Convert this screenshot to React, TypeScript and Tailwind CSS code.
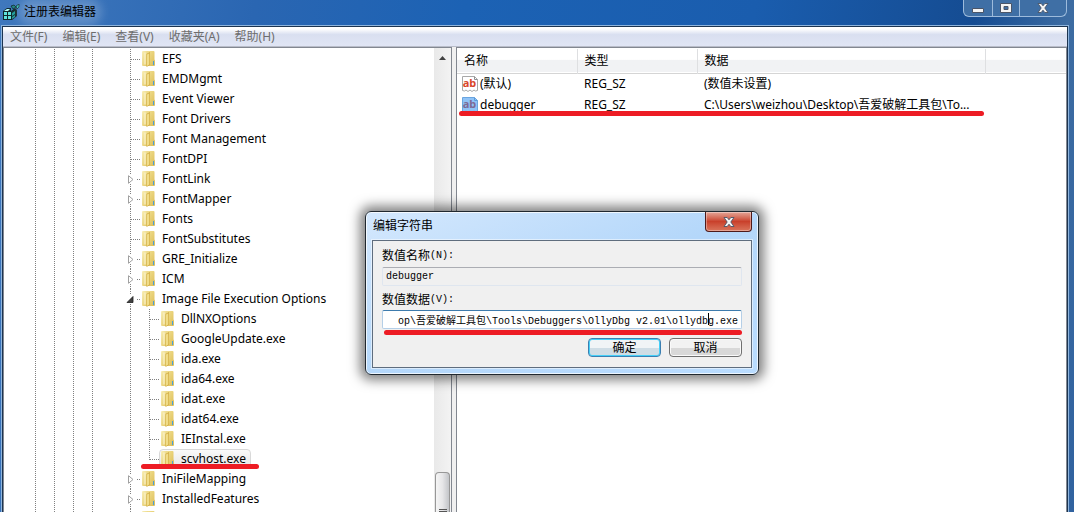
import { ReactNode } from "react";

type Node = {
  name: string;
  state?: "closed" | "open";
  child?: boolean;
  last?: boolean;
  selected?: boolean;
};

const nodes: Node[] = [
  { name: "EFS" },
  { name: "EMDMgmt" },
  { name: "Event Viewer" },
  { name: "Font Drivers" },
  { name: "Font Management" },
  { name: "FontDPI" },
  { name: "FontLink", state: "closed" },
  { name: "FontMapper", state: "closed" },
  { name: "Fonts" },
  { name: "FontSubstitutes" },
  { name: "GRE_Initialize", state: "closed" },
  { name: "ICM", state: "closed" },
  { name: "Image File Execution Options", state: "open" },
  { name: "DllNXOptions", child: true },
  { name: "GoogleUpdate.exe", child: true },
  { name: "ida.exe", child: true },
  { name: "ida64.exe", child: true },
  { name: "idat.exe", child: true },
  { name: "idat64.exe", child: true },
  { name: "IEInstal.exe", child: true },
  { name: "scvhost.exe", child: true, last: true, selected: true },
  { name: "IniFileMapping", state: "closed" },
  { name: "InstalledFeatures", state: "closed" },
  { name: "" },
];

const values = [
  { name: "(默认)", type: "REG_SZ", data: "(数值未设置)", selected: false },
  {
    name: "debugger",
    type: "REG_SZ",
    data: "C:\\Users\\weizhou\\Desktop\\吾爱破解工具包\\To...",
    selected: true,
  },
];

const menus = ["文件(F)", "编辑(E)", "查看(V)", "收藏夹(A)", "帮助(H)"];

const dotsY = "bg-[repeating-linear-gradient(to_bottom,#808080_0_1px,transparent_1px_2px)]";
const dotsX = "bg-[repeating-linear-gradient(to_right,#808080_0_1px,transparent_1px_2px)]";

function FolderIcon() {
  return (
    <svg width="14" height="16" viewBox="0 0 14 16" className="shrink-0" aria-hidden>
      <defs>
        <linearGradient id="folder-back" x1="0" x2="1" y1="0" y2="1">
          <stop offset="0" stopColor="#f3e396" />
          <stop offset="1" stopColor="#dcbc55" />
        </linearGradient>
        <linearGradient id="folder-front" x1="0" x2="1" y1="0" y2="1">
          <stop offset="0" stopColor="#f8efb8" />
          <stop offset="1" stopColor="#e2c561" />
        </linearGradient>
      </defs>
      <path d="M4 0h7.500q1 0 1 1v7.500l.5 1V14q0 1-1 1H4z" fill="url(#folder-back)" />
      <path d="M0 1q0-1 1-1h5v14l-1.500 1H1q-1 0-1-1z" fill="url(#folder-front)" />
      <path d="M4.500 3 8 1v13l-3.500 2z" fill="#d0ab42" />
      <path d="M5 3.500 7.300 2.200v11.300L5 15z" fill="#f0dc88" />
      <path d="M3 1.500v12" stroke="#fdf8d8" strokeWidth="1" />
      <path d="M11.500 10v4" stroke="#4aa0d8" strokeWidth="1" />
    </svg>
  );
}

function ValueIcon({ selected }: { selected: boolean }) {
  return (
    <svg width="16" height="16" viewBox="0 0 16 16" className="shrink-0" aria-hidden>
      <path
        d="M.5.500h12l3 3v11l-2 .5-1.500-1-2 1.500-2-1.500-2 1.500-2-1.500-1.500 1-2-.5z"
        fill={selected ? "#8fc3f7" : "#fff"}
        stroke={selected ? "#6aa5e0" : "#a8a8a8"}
      />
      <path d="M12.500.500v3h3" fill="none" stroke={selected ? "#5d9ad8" : "#909090"} />
      <text x="7.500" y="11" textAnchor="middle" fontSize="11" fontWeight="700" fontFamily="Noto Sans, sans-serif" fill={selected ? "#7d6a96" : "#d8472b"}>
        ab
      </text>
    </svg>
  );
}

function Guide({ line = true }: { line?: boolean }) {
  return <span className="flex h-5 w-[19px] shrink-0 justify-center">{line && <span className={`w-px ${dotsY}`} />}</span>;
}

function Joint({ state, last }: { state?: Node["state"]; last?: boolean }) {
  if (state) {
    return (
      <span className="grid h-5 w-[19px] shrink-0 grid-cols-[5px_9px_5px] grid-rows-[6px_9px_5px] items-center justify-items-center">
        <span className={`col-start-2 h-full w-px ${dotsY}`} />
        <button className="col-start-2 row-start-2 block" aria-label={state === "open" ? "折叠" : "展开"}>
          <svg width="9" height="9" viewBox="0 0 9 9">
            {state === "open" ? (
              <path d="M7 1.500V7.500H1z" fill="#404040" stroke="#202020" strokeWidth=".8" />
            ) : (
              <path d="M2.500.700 7 4.500 2.500 8.300z" fill="#fff" stroke="#a0a0a0" />
            )}
          </svg>
        </button>
        <span className={`col-start-3 row-start-2 h-px w-[3px] justify-self-end ${dotsX}`} />
        <span className={`col-start-2 row-start-3 h-full w-px ${dotsY}`} />
      </span>
    );
  }
  return (
    <span className="flex h-5 w-[19px] shrink-0 items-start pl-[9px]">
      <span className={`w-px shrink-0 ${last ? "h-[11px]" : "h-5"} ${dotsY}`} />
      <span className={`mt-[10px] h-px flex-1 ${dotsX}`} />
    </span>
  );
}

function TreeRow({ node }: { node: Node }) {
  return (
    <li className="flex h-5 items-center">
      <Guide />
      <Guide />
      <Guide />
      <Guide />
      <Guide line={false} />
      {node.child ? <Guide /> : null}
      <Joint state={node.state} last={node.last} />
      <span
        className={`flex h-5 items-center rounded-sm border pr-1 pl-px ${
          node.selected ? "border-[#d9d9d9] bg-linear-to-b from-[#fafafa] to-[#e5e5e5]" : "border-transparent"
        }`}
      >
        <FolderIcon />
        <span className="ml-1.5 whitespace-nowrap leading-4">{node.name}</span>
      </span>
    </li>
  );
}

function CaptionButton({ label, children, className }: { label: string; children: ReactNode; className: string }) {
  return (
    <button aria-label={label} className={`flex h-full items-center justify-center border-[#9dbbdc] ${className}`}>
      {children}
    </button>
  );
}

function CloseMark() {
  return (
    <svg width="12" height="10" viewBox="0 0 12 10" aria-hidden>
      <path d="M1 .500h3.200L6 2.800 7.800.500H11L7.800 5 11 9.500H7.800L6 7.200 4.200 9.500H1L4.200 5z" fill="#f4f4f4" stroke="#4a5568" strokeWidth=".9" />
    </svg>
  );
}

function TitleBar() {
  return (
    <header className="flex h-[26px] shrink-0 items-start justify-between">
      <div className="flex h-6 items-center gap-1 pl-[3px]">
        <svg width="17" height="16" viewBox="0 0 17 16" aria-hidden>
          <path d="M0 7 4 4h4v3l4-3 2 2v6l-5 4H0z" fill="#10282c" />
          <path d="M1 8h3v3H1zM5 8h3v3H5zM1 12h3v3H1zM5 12h3v3H5z" fill="#5fe3dc" />
          <path d="m1 7 3-2h3L5 7z" fill="#b8fffa" />
          <path d="m9 9 3-2v3l-3 2zM9 13l3-2v2l-3 2z" fill="#1f9c98" />
          <path d="m8 2 3-1 2 2-3 2z" fill="#1f8580" stroke="#0b1f22" strokeWidth=".7" />
          <path d="m13 2 3-2v3l-2 2z" fill="#35bdb6" stroke="#0b1f22" strokeWidth=".7" />
        </svg>
        <h1 className="rounded-full bg-white/20 text-black shadow-[0_0_10px_6px_rgba(255,255,255,0.2)]">注册表编辑器</h1>
      </div>
      <div className="mr-[7px] flex h-[17px] overflow-hidden rounded-b-md border border-t-0 border-[#9dbbdc] bg-[#3f6fa5]">
        <CaptionButton label="最小化" className="w-[29px] border-r">
          <svg width="12" height="5" viewBox="0 0 12 5" className="mt-1" aria-hidden>
            <path d="M.5.500h11v4H.5z" fill="#f4f4f4" stroke="#4a5568" />
          </svg>
        </CaptionButton>
        <CaptionButton label="最大化" className="w-[27px] border-r">
          <svg width="12" height="10" viewBox="0 0 12 10" aria-hidden>
            <path fillRule="evenodd" d="M.5.500h11v9H.5zM4 3.500h4v3H4z" fill="#f4f4f4" stroke="#4a5568" />
          </svg>
        </CaptionButton>
        <CaptionButton label="关闭" className="w-[46px]">
          <CloseMark />
        </CaptionButton>
      </div>
    </header>
  );
}

function TreePane() {
  return (
    <section className="relative flex w-[449px] shrink-0 overflow-hidden border border-b-0 border-[#828790] bg-white">
      <ul className="flex-1 pt-px pl-[22px]">
        {nodes.map((n, i) => (
          <TreeRow key={i} node={n} />
        ))}
      </ul>
      <div className="flex w-[17px] flex-col items-center justify-between bg-linear-to-r from-[#e9e9e9] to-[#f3f3f3]">
        <button aria-label="向上滚动" className="flex h-5 w-full items-center justify-center">
          <svg width="7" height="4" viewBox="0 0 7 4" aria-hidden>
            <path d="M0 4 3.500 0 7 4z" fill="#404040" />
          </svg>
        </button>
        <div className="flex h-10 w-[15px] flex-col items-center justify-end gap-px rounded-t-sm border border-b-0 border-[#979797] bg-linear-to-r from-[#f5f5f5] via-[#e6e6e8] to-[#c3c5c9]">
          <span className="h-px w-2 bg-[#555]" />
          <span className="h-px w-2 bg-[#555]" />
        </div>
      </div>
      {/* marker stroke under the selected key */}
      <span className="absolute top-[416px] left-[137px] h-[5px] w-[118px] rounded-full bg-[#ed1c24]" />
    </section>
  );
}

function ValuePane() {
  return (
    <section className="relative min-w-0 flex-1 overflow-hidden border border-b-0 border-[#828790] bg-white pt-px">
      <table className="w-full table-fixed border-collapse text-left">
        <colgroup>
          <col className="w-[120px]" />
          <col className="w-[120px]" />
          <col className="w-[288px]" />
          <col />
        </colgroup>
        <thead>
          <tr className="h-6 border-b border-[#d5d5d5] bg-linear-to-b from-white from-45% to-[#f1f2f4] to-50%">
            {["名称", "类型", "数据"].map((h) => (
              <th key={h} className="border-r border-[#dedfe1] pl-[7px] font-normal">
                {h}
              </th>
            ))}
            <th />
          </tr>
        </thead>
        <tbody>
          {values.map((v) => (
            <tr key={v.name} className="h-[21px]">
              <td className="pl-[5px]">
                <span className="flex items-center gap-0.5">
                  <ValueIcon selected={v.selected} />
                  {v.name}
                </span>
              </td>
              <td className="pl-[7px]">{v.type}</td>
              <td className="whitespace-nowrap pl-[7px]">{v.data}</td>
              <td />
            </tr>
          ))}
        </tbody>
      </table>
      {/* marker stroke under the debugger value */}
      <span className="absolute top-[63px] left-[2px] h-[5px] w-[525px] rounded-full bg-[#ed1c24]" />
    </section>
  );
}

function EditDialog() {
  const field = "block h-[19px] w-full border px-[3px] font-['Liberation_Mono','Noto_Sans_CJK_SC',monospace] text-[10px] outline-none";
  return (
    <div
      role="dialog"
      aria-label="编辑字符串"
      className="absolute top-[211px] left-[365px] w-[394px] rounded-md border border-[#20282f] bg-linear-to-br from-[#d4e8fd] via-[#b4d7fa] to-[#b9dcff] px-[6px] pb-[6px] shadow-[0_0_12px_5px_rgba(0,0,0,0.5),inset_0_0_0_1px_rgba(255,255,255,0.75)]"
    >
      <div className="flex h-7 items-start justify-between">
        <h2 className="pt-1.5 pl-px">编辑字符串</h2>
        <button
          aria-label="关闭"
          className="flex h-5 w-[47px] items-center justify-center rounded-b-sm border border-t-0 border-[#4e1a1a] bg-linear-to-b from-[#e3a597] from-0% via-[#c9402b] via-50% to-[#d9745b] shadow-[inset_0_0_0_1px_rgba(255,255,255,0.35)]"
        >
          <CloseMark />
        </button>
      </div>
      <form className="border border-[#5f6d7e] bg-[#f0f0f0] px-[9px] pt-[7px] pb-[10px] shadow-[0_0_0_1px_rgba(255,255,255,0.5)]">
        <label htmlFor="value-name" className="mb-[3px] flex h-4 items-center">
          数值名称<span className="font-['Liberation_Mono',monospace] text-[10px]">(N):</span>
        </label>
        <input id="value-name" readOnly value="debugger" className={`${field} rounded-xs border-[#dfe6ef] border-t-[#abadb3] bg-[#f0f0f0]`} />
        <label htmlFor="value-data" className="mt-1.5 mb-0.5 flex h-4 items-center">
          数值数据<span className="font-['Liberation_Mono',monospace] text-[10px]">(V):</span>
        </label>
        <div className="relative">
          <input
            id="value-data"
            readOnly
            value={"op\\吾爱破解工具包\\Tools\\Debuggers\\OllyDbg v2.01\\ollydbg.exe"}
            className={`${field} rounded-xs border-[#b5cfe7] border-t-[#3d7bad] bg-white text-right`}
          />
          <span className="absolute top-[3px] right-[33px] h-3 w-px bg-black" />
          <span className="absolute top-5 right-0 h-[5px] w-[358px] rounded-full bg-[#ed1c24]" />
        </div>
        <div className="mt-[9px] flex justify-end gap-2">
          <button
            type="button"
            className="h-[19px] w-[73px] rounded-sm border border-[#3c7fb1] bg-linear-to-b from-[#f0f4f6] from-50% to-[#cfdde5] to-55% leading-4 shadow-[inset_0_0_0_1px_#45d0f8]"
          >
            确定
          </button>
          <button
            type="button"
            className="h-[19px] w-[73px] rounded-sm border border-[#707070] bg-linear-to-b from-[#f2f2f2] from-50% to-[#d8d8d8] to-55% leading-4 shadow-[inset_0_0_0_1px_#fafafa]"
          >
            取消
          </button>
        </div>
      </form>
    </div>
  );
}

export default function App() {
  return (
    <div className="relative flex h-screen flex-col overflow-hidden bg-[linear-gradient(100deg,#3f78bd_0%,#2a66b2_22%,#1c62b4_40%,#1a5dae_65%,#154c92_84%,#3d6ca2_92%,#30629f_100%)] font-['Noto_Sans','Noto_Sans_CJK_SC',sans-serif] text-[12px] leading-4 text-black">
      <TitleBar />
      <main className="mr-[6px] ml-[2px] flex min-h-0 flex-1 flex-col border border-b-0 border-[#1c3450] bg-[#f0f0f0] shadow-[0_0_0_1px_#8fb5dd]">
        <nav className="flex h-5 shrink-0 items-center gap-[15px] border-b border-[#b8bcc8] bg-linear-to-b from-white from-10% via-[#d9dff0] via-40% to-[#e0e5f4] pl-[7px] text-[#6d6d6d]">
          {menus.map((m) => (
            <button key={m}>{m}</button>
          ))}
        </nav>
        <div className="flex min-h-0 flex-1 gap-1">
          <TreePane />
          <ValuePane />
        </div>
      </main>
      <EditDialog />
    </div>
  );
}
